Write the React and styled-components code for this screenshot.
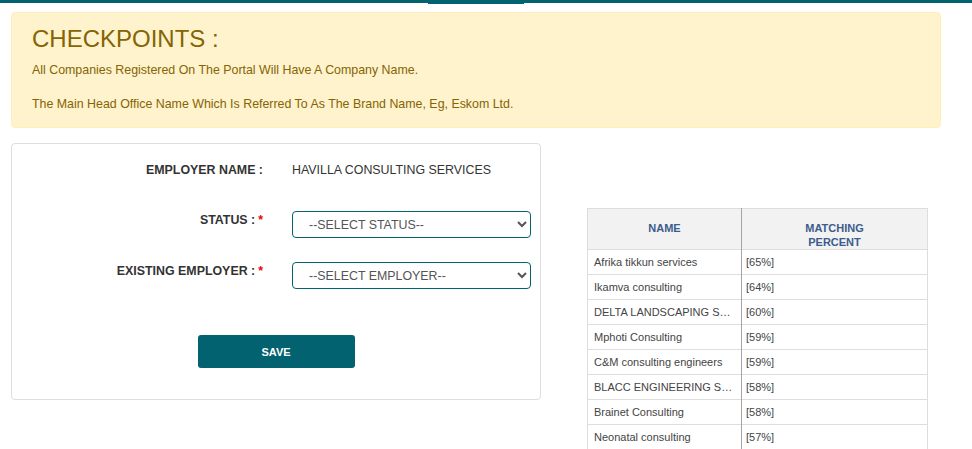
import React from "react";
import styled, { createGlobalStyle } from "styled-components";

const GlobalStyle = createGlobalStyle`
  html, body {
    margin: 0;
    padding: 0;
    background: #fff;
    font-family: "Liberation Sans", Arial, sans-serif;
  }
  * {
    box-sizing: border-box;
  }
`;

const TopBar = styled.div`
  display: flex;
  height: 3px;
  background: #03626f;
`;

const ActiveTab = styled.div`
  margin-left: 428px;
  width: 96px;
  height: 4px;
  flex-shrink: 0;
  background: #03626f;
`;

const Page = styled.div`
  width: 930px;
  margin: 9px 0 0 11px;
`;

const Alert = styled.div`
  background: #fff3cd;
  border: 1px solid #ffeeba;
  border-radius: 4px;
  color: #856404;
  padding: 11px 20px 14px;
`;

const AlertTitle = styled.h2`
  margin: 0 0 9px;
  font-size: 24px;
  font-weight: normal;
  line-height: 29px;
`;

const AlertText = styled.p`
  margin: 0;
  font-size: 12.4px;
  line-height: 17px;
`;

const Body = styled.div`
  display: flex;
  align-items: flex-start;
  gap: 46px;
  margin-top: 15px;
`;

const FormCard = styled.div`
  width: 530px;
  border: 1px solid #ddd;
  border-radius: 4px;
  padding: 16px 10px 31px 0;
  display: flex;
  flex-direction: column;
`;

const FormRow = styled.div`
  display: grid;
  grid-template-columns: 251px 239px;
  column-gap: 29px;
  align-items: start;
  margin-top: ${(props) => props.$gap || 0}px;
`;

const Label = styled.label`
  text-align: right;
  font-size: 12.4px;
  font-weight: bold;
  line-height: 17px;
  color: #333;
  padding-top: ${(props) => props.$pad || 0}px;
`;

const Required = styled.span`
  color: #e00;
  margin-left: 3px;
`;

const Value = styled.div`
  font-size: 12.4px;
  line-height: 20px;
  color: #333;
  text-transform: uppercase;
`;

const Select = styled.select`
  width: 239px;
  height: 27px;
  border: 1px solid #03626f;
  border-radius: 4px;
  background: #fff;
  color: #555;
  font-family: "Liberation Sans", Arial, sans-serif;
  font-size: 12.4px;
  padding: 0 6px 0 12px;
  outline: none;
`;

const SaveButton = styled.button`
  align-self: center;
  margin: 46px 0 0 10px;
  width: 157px;
  height: 33px;
  border: none;
  border-radius: 3px;
  background: #03626f;
  color: #fff;
  font-family: "Liberation Sans", Arial, sans-serif;
  font-size: 11px;
  font-weight: bold;
  cursor: pointer;
`;

const MatchTable = styled.table`
  margin-top: 65px;
  width: 341px;
  table-layout: fixed;
  border-collapse: collapse;
  border: 1px solid #ddd;
  font-size: 11px;
`;

const HeadCell = styled.th`
  width: ${(props) => props.$width}px;
  height: 40px;
  background: #f2f2f2;
  color: #3d5b8d;
  font-weight: bold;
  line-height: 14px;
  text-align: center;
  vertical-align: top;
  padding: 12px 4px 0;
  border-right: 1px solid ${(props) => (props.$divider ? "#a5a5a5" : "#ddd")};
`;

const Cell = styled.td`
  height: 25px;
  padding: 0 6px 0 ${(props) => props.$pad || 6}px;
  color: #444;
  white-space: nowrap;
  overflow: hidden;
  text-overflow: ellipsis;
  border-top: 1px solid #ddd;
  border-right: 1px solid ${(props) => (props.$divider ? "#a5a5a5" : "#ddd")};
`;

const matches = [
  { name: "Afrika tikkun services", percent: 65 },
  { name: "Ikamva consulting", percent: 64 },
  { name: "DELTA LANDSCAPING SERVICES", percent: 60 },
  { name: "Mphoti Consulting", percent: 59 },
  { name: "C&M consulting engineers", percent: 59 },
  { name: "BLACC ENGINEERING SOLUTIONS", percent: 58 },
  { name: "Brainet Consulting", percent: 58 },
  { name: "Neonatal consulting", percent: 57 },
];

const App = () => {
  return (
    <>
      <GlobalStyle />
      <TopBar>
        <ActiveTab />
      </TopBar>
      <Page>
        <Alert>
          <AlertTitle>CHECKPOINTS :</AlertTitle>
          <AlertText>
            All Companies Registered On The Portal Will Have A Company Name.
            <br />
            <br />
            The Main Head Office Name Which Is Referred To As The Brand Name,
            Eg, Eskom Ltd.
          </AlertText>
        </Alert>

        <Body>
          <FormCard>
            <FormRow>
              <Label $pad={2}>EMPLOYER NAME :</Label>
              <Value>Havilla Consulting Services</Value>
            </FormRow>
            <FormRow $gap={31}>
              <Label $pad={1}>
                STATUS :<Required>*</Required>
              </Label>
              <Select defaultValue="">
                <option value="">--SELECT STATUS--</option>
              </Select>
            </FormRow>
            <FormRow $gap={24}>
              <Label $pad={1}>
                EXISTING EMPLOYER :<Required>*</Required>
              </Label>
              <Select defaultValue="">
                <option value="">--SELECT EMPLOYER--</option>
              </Select>
            </FormRow>
            <SaveButton>SAVE</SaveButton>
          </FormCard>

          <MatchTable>
            <thead>
              <tr>
                <HeadCell $width={154} $divider>
                  NAME
                </HeadCell>
                <HeadCell $width={186}>
                  MATCHING
                  <br />
                  PERCENT
                </HeadCell>
              </tr>
            </thead>
            <tbody>
              {matches.map((m) => (
                <tr key={m.name}>
                  <Cell $divider>{m.name}</Cell>
                  <Cell $pad={4}>[{m.percent}%]</Cell>
                </tr>
              ))}
            </tbody>
          </MatchTable>
        </Body>
      </Page>
    </>
  );
};

export default App;
